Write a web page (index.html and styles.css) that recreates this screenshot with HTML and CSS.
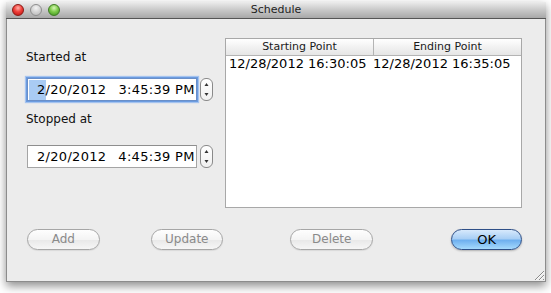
FILE: index.html
```html
<!DOCTYPE html>
<html>
<head>
<meta charset="utf-8">
<link rel="stylesheet" href="styles.css">
</head>
<body>
<div class="window">
  <div class="titlebar">
    <div class="lights">
      <span class="light red"></span>
      <span class="light gray"></span>
      <span class="light green"></span>
    </div>
    <div class="title">Schedule</div>
  </div>
  <div class="body">
    <div class="main">
      <div class="left">
        <div class="label first">Started at</div>
        <div class="spin-row">
          <div class="field focused"><span class="sel">2</span>/20/2012<span class="gap"></span>3:45:39 PM</div>
          <div class="stepper">
            <svg width="13" height="23" viewBox="0 0 13 23"><path d="M4.5 8 L6.5 5 L8.5 8 Z" fill="#333"/><path d="M4.5 15 L6.5 18 L8.5 15 Z" fill="#333"/></svg>
          </div>
        </div>
        <div class="label second">Stopped at</div>
        <div class="spin-row">
          <div class="field">2/20/2012<span class="gap"></span>4:45:39 PM</div>
          <div class="stepper">
            <svg width="13" height="23" viewBox="0 0 13 23"><path d="M4.5 8 L6.5 5 L8.5 8 Z" fill="#333"/><path d="M4.5 15 L6.5 18 L8.5 15 Z" fill="#333"/></svg>
          </div>
        </div>
      </div>
      <div class="table">
        <div class="thead">
          <div class="th c1">Starting Point</div>
          <div class="th c2">Ending Point</div>
        </div>
        <div class="row">
          <div class="td c1">12/28/2012 16:30:05</div>
          <div class="td c2">12/28/2012 16:35:05</div>
        </div>
      </div>
    </div>
    <div class="buttons">
      <div class="btn add">Add</div>
      <div class="btn update">Update</div>
      <div class="btn delete">Delete</div>
      <div class="btn ok">OK</div>
    </div>
    <svg class="grip" width="13" height="13" viewBox="0 0 13 13">
      <path d="M12 3 L3 12 M12 7 L7 12 M12 11 L11 12" stroke="#8a8a8a" stroke-width="1"/>
      <path d="M12 4 L4 12 M12 8 L8 12" stroke="#fafafa" stroke-width="1"/>
    </svg>
  </div>
</div>
</body>
</html>
```

FILE: styles.css
```css
html, body {
  margin: 0;
  padding: 0;
  background: #ffffff;
}
body {
  font-family: "DejaVu Sans", sans-serif;
  width: 551px;
  height: 293px;
  overflow: hidden;
}
.window {
  position: relative;
  box-sizing: border-box;
  margin: 2px 0 0 6px;
  width: 540px;
  height: 280px;
  background: #ececec;
  border: 1px solid #8c8c8c;
  border-top: none;
  box-shadow: 0 4px 9px rgba(0, 0, 0, 0.45);
}
.titlebar {
  position: relative;
  height: 16px;
  margin: 0 -1px;
  border-bottom: 1px solid #555555;
  background: linear-gradient(#ececec, #c8c8c8 50%, #a8a8a8);
  display: flex;
  align-items: center;
  justify-content: center;
}
.lights {
  position: absolute;
  left: 6px;
  top: 2px;
  display: flex;
  gap: 6px;
}
.light {
  width: 12px;
  height: 12px;
  border-radius: 50%;
  box-sizing: border-box;
}
.light.red {
  background: radial-gradient(circle at 50% 30%, #ffb0a8 0, #f0403a 45%, #b80e0e 100%);
  border: 1px solid #8a1a14;
}
.light.gray {
  background: radial-gradient(circle at 50% 30%, #f4f4f4 0, #d2d2d2 50%, #b5b5b5 100%);
  border: 1px solid #8e8e8e;
}
.light.green {
  background: radial-gradient(circle at 50% 30%, #d8f5b8 0, #7ecc4a 45%, #3a8f1c 100%);
  border: 1px solid #3f7a24;
}
.title {
  font-size: 11px;
  color: #1e1e1e;
  line-height: 16px;
}
.body {
  padding: 19px 23px 0 19px;
}
.main {
  display: flex;
}
.left {
  width: 199px;
  flex: none;
}
.label {
  font-size: 12px;
  line-height: 16px;
  color: #111;
}
.label.first { margin-top: 11px; margin-bottom: 13px; }
.label.second { margin-top: 10px; margin-bottom: 18px; }
.spin-row {
  display: flex;
  gap: 3px;
  padding-left: 1px;
}
.field {
  box-sizing: border-box;
  width: 170px;
  height: 23px;
  border: 1px solid #a4a4a4;
  border-top-color: #8e8e8e;
  background: #fff;
  padding-left: 9px;
  font-size: 13px;
  line-height: 21px;
  letter-spacing: 0.3px;
  color: #000;
  white-space: nowrap;
}
.field.focused {
  box-shadow: 0 0 0 1px #6c9ce0, 0 0 1px 2px #a4c3ef;
  border-color: #6a8fc8;
}
.sel {
  display: inline-block;
  background: #a9cbf4;
  padding-left: 8px;
  margin-left: -8px;
  line-height: 20px;
}
.gap {
  display: inline-block;
  width: 12px;
}
.stepper {
  box-sizing: border-box;
  width: 13px;
  height: 23px;
  border: 1px solid #8a8a8a;
  border-radius: 6px;
  background: linear-gradient(#ffffff, #f0f0f0);
  overflow: hidden;
}
.stepper svg {
  display: block;
  margin: -1px 0 0 -1px;
}
.table {
  box-sizing: border-box;
  width: 298px;
  height: 170px;
  border: 1px solid #a8a8a8;
  background: #fff;
}
.thead {
  display: flex;
  height: 16px;
  border-bottom: 1px solid #b4b4b4;
  background: linear-gradient(#ffffff, #f2f2f2 50%, #e6e6e6);
}
.th {
  font-size: 11px;
  line-height: 16px;
  text-align: center;
  color: #1a1a1a;
}
.th.c1 { width: 147px; border-right: 1px solid #b4b4b4; }
.th.c2 { flex: 1; }
.row {
  display: flex;
  height: 16px;
}
.td {
  font-size: 13px;
  line-height: 16px;
  color: #000;
  white-space: nowrap;
}
.td.c1 { width: 144px; padding-left: 3px; }
.td.c2 { flex: 1; padding-left: 0; }
.buttons {
  display: flex;
  margin-top: 21px;
}
.btn {
  box-sizing: border-box;
  height: 21px;
  border: 1px solid #a6a6a6;
  border-radius: 11px;
  background: linear-gradient(#fefefe, #f4f4f4 50%, #e9e9e9 55%, #f6f6f6);
  font-size: 12px;
  line-height: 19px;
  text-align: center;
  color: #8a8a8a;
  box-shadow: 0 1px 1px rgba(0, 0, 0, 0.08);
}
.btn.add { width: 73px; margin-left: 1px; }
.btn.update { width: 73px; margin-left: 51px; }
.btn.delete { width: 84px; margin-left: 67px; }
.btn.ok {
  width: 71px;
  margin-left: 78px;
  color: #000;
  font-size: 13px;
  border-color: #2e4f87;
  background: linear-gradient(#d7e9fc, #a9cff5 45%, #6fb0ef 55%, #a6dafd);
  box-shadow: 0 1px 2px rgba(0, 0, 0, 0.25);
}
.grip {
  position: absolute;
  right: 0;
  bottom: 0;
}
```
